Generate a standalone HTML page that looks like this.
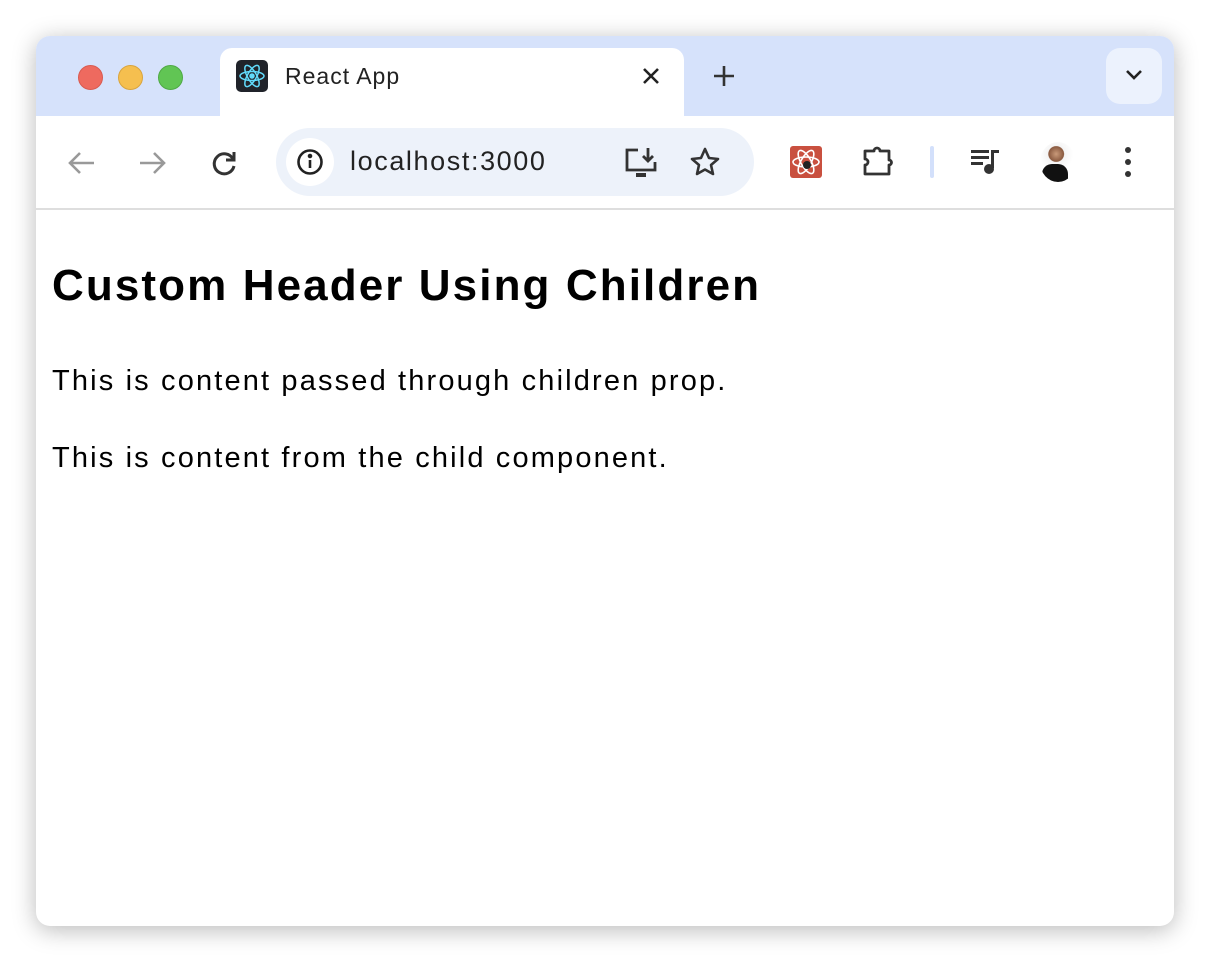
<!DOCTYPE html>
<html><head><style>
body{margin:0;width:1210px;height:962px;background:#fff;font-family:"Liberation Sans",sans-serif;position:relative;overflow:hidden}
.win{position:absolute;left:36px;top:36px;width:1138px;height:890px;border-radius:14px;background:#fff;box-shadow:0 4px 24px rgba(0,0,0,.28);overflow:hidden}
.strip{position:absolute;left:0;top:0;width:100%;height:80px;background:#d6e2fb}
.dot{position:absolute;top:29px;width:23px;height:23px;border-radius:50%}
.tab{position:absolute;left:184px;top:12px;width:464px;height:70px;background:#fff;border-radius:12px 12px 0 0}
.tb{position:absolute;left:0;top:80px;width:100%;height:92px;background:#fff;border-radius:12px 12px 0 0;border-bottom:2px solid #dedede}
.omni{position:absolute;left:240px;top:12px;width:478px;height:68px;border-radius:34px;background:#edf2fa}
.ic{position:absolute}
h1{position:absolute;left:16px;top:225px;margin:0;font-size:44px;letter-spacing:2.1px;font-weight:bold;color:#000;white-space:nowrap}
p{position:absolute;left:16px;margin:0;font-size:29px;letter-spacing:2.15px;color:#000;white-space:nowrap}
</style></head><body>
<div class="win">
<div class="strip"></div>
<div class="dot" style="left:42px;background:#ee6a5f;border:1px solid #d85a50"></div>
<div class="dot" style="left:82px;background:#f5bf4f;border:1px solid #d9a43d"></div>
<div class="dot" style="left:122px;background:#61c554;border:1px solid #4fa944"></div>
<div class="tab"></div>
<div style="position:absolute;left:200px;top:24px;width:32px;height:32px;background:#20232a;border-radius:5px"></div>
<svg class="ic" style="left:200px;top:24px" width="32" height="32" viewBox="0 0 32 32" fill="none" stroke="#61dafb" stroke-width="1.5"><ellipse cx="16" cy="16" rx="12" ry="4.5"/><ellipse cx="16" cy="16" rx="12" ry="4.5" transform="rotate(60 16 16)"/><ellipse cx="16" cy="16" rx="12" ry="4.5" transform="rotate(120 16 16)"/><circle cx="16" cy="16" r="2" fill="#61dafb"/></svg>
<div style="position:absolute;left:249px;top:27px;font-size:23px;letter-spacing:1px;color:#222">React App</div>
<svg class="ic" style="left:605px;top:30px" width="20" height="20" stroke="#222" stroke-width="2.6"><path d="M3 3L17 17M17 3L3 17"/></svg>
<svg class="ic" style="left:676px;top:28px" width="24" height="24" stroke="#333" stroke-width="2.6"><path d="M12 2V22M2 12H22"/></svg>
<div style="position:absolute;left:1070px;top:12px;width:56px;height:56px;border-radius:14px;background:#ecf2fd"></div>
<svg class="ic" style="left:1088px;top:32px" width="20" height="14" fill="none" stroke="#222" stroke-width="2.6"><path d="M3 3L10 10L17 3"/></svg>
<div class="tb">
<svg class="ic" style="left:30px;top:34px" width="30" height="26" fill="none" stroke="#999" stroke-width="2.6"><path d="M28 13H4M14 3L4 13L14 23"/></svg>
<svg class="ic" style="left:102px;top:34px" width="30" height="26" fill="none" stroke="#999" stroke-width="2.6"><path d="M2 13H26M16 3L26 13L16 23"/></svg>
<svg class="ic" style="left:174px;top:32px" width="30" height="30" fill="none" stroke="#333" stroke-width="3"><path d="M23 11A10 10 0 1 0 24 18"/><path d="M24 4V12H16" stroke-linejoin="miter"/></svg>
<div class="omni">
<div style="position:absolute;left:10px;top:10px;width:48px;height:48px;border-radius:50%;background:#fff"></div>
<svg class="ic" style="left:20px;top:20px" width="28" height="28" fill="none" stroke="#222" stroke-width="2.6"><circle cx="14" cy="14" r="11.5"/><path d="M14 12V20"/><circle cx="14" cy="8" r="1" fill="#222"/></svg>
<div style="position:absolute;left:74px;top:18px;font-size:27px;letter-spacing:1.6px;color:#222">localhost:3000</div>
<svg class="ic" style="left:348px;top:18px" width="36" height="34" fill="none" stroke="#333" stroke-width="2.8"><path d="M14 4H3V24H31V16"/><path d="M24 2V14M19 10L24 15L29 10"/><path d="M12 29H22" stroke-width="4"/></svg>
<svg class="ic" style="left:412px;top:18px" width="34" height="32" fill="none" stroke="#333" stroke-width="2.6" stroke-linejoin="round"><path d="M17 3L21 12L30 13L23 19L25 28L17 23.5L9 28L11 19L4 13L13 12Z"/></svg>
</div>
<div style="position:absolute;left:754px;top:30px;width:32px;height:32px;background:#c9503f;border-radius:3px"></div>
<svg class="ic" style="left:754px;top:30px" width="32" height="32" fill="none" stroke="#fff" stroke-width="1.6"><ellipse cx="16" cy="16" rx="13" ry="5"/><ellipse cx="16" cy="16" rx="13" ry="5" transform="rotate(60 16 16)"/><ellipse cx="16" cy="16" rx="13" ry="5" transform="rotate(120 16 16)"/><circle cx="17" cy="19" r="4" fill="#222" stroke="none"/></svg>
<svg class="ic" style="left:826px;top:28px" width="36" height="36" fill="none" stroke="#333" stroke-width="2.8" stroke-linejoin="round"><path d="M3 7H12A3 3 0 0 1 18 7H27V16A2.5 2.5 0 0 1 27 21V30H3V21A3 3 0 0 0 3 15Z"/></svg>
<div style="position:absolute;left:894px;top:30px;width:4px;height:32px;border-radius:2px;background:#d3e0fb"></div>
<svg class="ic" style="left:934px;top:30px" width="34" height="32" fill="#333"><rect x="1" y="4" width="18" height="3"/><rect x="1" y="10" width="18" height="3"/><rect x="1" y="16" width="12" height="3"/><rect x="21" y="4" width="3" height="18"/><rect x="21" y="4" width="8" height="3"/><circle cx="19" cy="23" r="5"/></svg>
<div style="position:absolute;left:1004px;top:26px;width:36px;height:40px;border-radius:50%;background:radial-gradient(circle at 45% 30%,#c99a7a 0,#8a5a40 22%,#f4f4f4 24%,#fff 50%);overflow:hidden"><div style="position:absolute;left:2px;top:22px;width:26px;height:20px;background:#111;border-radius:10px 10px 0 0"></div></div>
<svg class="ic" style="left:1084px;top:28px" width="16" height="36" fill="#333"><circle cx="8" cy="6" r="3"/><circle cx="8" cy="18" r="3"/><circle cx="8" cy="30" r="3"/></svg>
</div>
<h1>Custom Header Using Children</h1>
<p style="top:329px">This is content passed through children prop.</p>
<p style="top:406px">This is content from the child component.</p>
</div>
</body></html>
